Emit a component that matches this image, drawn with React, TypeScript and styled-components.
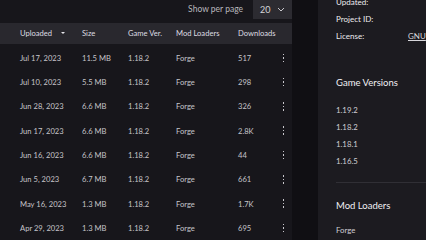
import React, { FC } from "react";
import styled, { createGlobalStyle } from "styled-components";

const GlobalStyle = createGlobalStyle`
  html, body {
    margin: 0;
    padding: 0;
    background: #100f13;
    font-family: Lato, "Noto Sans", sans-serif;
    -webkit-font-smoothing: antialiased;
    overflow: hidden;
  }
`;

const Page = styled.div`
  display: flex;
  width: 426px;
  height: 240px;
  overflow: hidden;
`;

const Files = styled.section`
  width: 292px;
  flex-shrink: 0;
  background: #17161b;
  display: flex;
  flex-direction: column;
`;

const Toolbar = styled.div`
  height: 31px;
  display: flex;
  align-items: flex-start;
  justify-content: flex-end;
  gap: 10px;
`;

const PerPageLabel = styled.span`
  margin-top: 4px;
  font-size: 8.5px;
  color: #b9b8bd;
`;

const Select = styled.div`
  width: 39px;
  height: 19px;
  background: #2c2b31;
  display: flex;
  align-items: center;
  justify-content: space-between;
  padding: 0 7px;
  box-sizing: border-box;
  font-size: 9px;
  color: #d5d4d8;
`;

const Row = styled.div<{ $head?: boolean }>`
  display: grid;
  grid-template-columns: 62px 46px 48px 62px 40px 1fr;
  align-items: center;
  padding-left: 20px;
  height: ${(p) => (p.$head ? "21px" : "24.3px")};
  background: ${(p) => (p.$head ? "#29282e" : "transparent")};
  margin-bottom: ${(p) => (p.$head ? "2px" : "0")};
  font-size: 7.6px;
  color: ${(p) => (p.$head ? "#dedde2" : "#c6c5ca")};
  flex-shrink: 0;
`;

const Cell = styled.span`
  color: inherit;
`;

const HeadCell = styled.span`
  display: flex;
  align-items: center;
  gap: 9px;
`;

const SortArrow = styled.span`
  width: 0;
  height: 0;
  border-left: 2px solid transparent;
  border-right: 2px solid transparent;
  border-top: 2.5px solid #e6e5ea;
`;

const Kebab = styled.span`
  display: flex;
  flex-direction: column;
  gap: 2px;
  padding-left: 4.5px;
  i {
    width: 1.5px;
    height: 1.5px;
    background: #c9c8cd;
    display: block;
  }
`;

const Sidebar = styled.aside`
  margin-left: 26px;
  flex: 1;
  background: #1c1b20;
  padding-left: 18px;
  color: #ecebef;
  display: flex;
  flex-direction: column;
`;

const InfoRow = styled.div<{ $first?: boolean }>`
  display: grid;
  grid-template-columns: 72px 1fr;
  height: 17px;
  align-items: center;
  font-size: 8px;
  margin-top: ${(p) => (p.$first ? "-7px" : "0")};
`;

const LinkText = styled.span`
  text-decoration: underline;
  color: #d8d7dc;
`;

const Spacer = styled.div<{ $h: number }>`
  height: ${(p) => p.$h}px;
  flex-shrink: 0;
`;

const Divider = styled.div`
  height: 1px;
  background: #302f35;
`;

const SectionTitle = styled.h3`
  margin: 0;
  font-size: 9.5px;
  font-weight: 400;
  color: #f1f0f4;
`;

const ListItem = styled.div`
  height: 17px;
  display: flex;
  align-items: center;
  font-size: 7.8px;
  color: #cfced3;
`;

type FileRow = [string, string, string, string, string];

const rows: FileRow[] = [
  ["Jul 17, 2023", "11.5 MB", "1.18.2", "Forge", "517"],
  ["Jul 10, 2023", "5.5 MB", "1.18.2", "Forge", "298"],
  ["Jun 28, 2023", "6.6 MB", "1.18.2", "Forge", "326"],
  ["Jun 17, 2023", "6.6 MB", "1.18.2", "Forge", "2.8K"],
  ["Jun 16, 2023", "6.6 MB", "1.18.2", "Forge", "44"],
  ["Jun 5, 2023", "6.7 MB", "1.18.2", "Forge", "661"],
  ["May 16, 2023", "1.3 MB", "1.18.2", "Forge", "1.7K"],
  ["Apr 29, 2023", "1.3 MB", "1.18.2", "Forge", "695"],
];

const Chevron: FC = () => (
  <svg width="8" height="5" viewBox="0 0 8 5">
    <path d="M1 1l3 3 3-3" fill="none" stroke="#c9c8cd" strokeWidth="1" />
  </svg>
);

export default function App() {
  return (
    <>
      <GlobalStyle />
      <Page>
        <Files>
          <Toolbar>
            <PerPageLabel>Show per page</PerPageLabel>
            <Select>
              <span>20</span>
              <Chevron />
            </Select>
          </Toolbar>
          <Row $head>
            <HeadCell>
              Uploaded <SortArrow />
            </HeadCell>
            <HeadCell>Size</HeadCell>
            <HeadCell>Game Ver.</HeadCell>
            <HeadCell>Mod Loaders</HeadCell>
            <HeadCell>Downloads</HeadCell>
            <span />
          </Row>
          {rows.map((r) => (
            <Row key={r[0]}>
              {r.map((c, i) => (
                <Cell key={i}>{c}</Cell>
              ))}
              <Kebab>
                <i />
                <i />
                <i />
              </Kebab>
            </Row>
          ))}
        </Files>
        <Sidebar>
          <InfoRow $first>
            <span>Updated:</span>
            <span />
          </InfoRow>
          <InfoRow>
            <span>Project ID:</span>
            <span />
          </InfoRow>
          <InfoRow>
            <span>License:</span>
            <LinkText>GNU</LinkText>
          </InfoRow>
          <Spacer $h={33} />
          <SectionTitle>Game Versions</SectionTitle>
          <Spacer $h={13} />
          <ListItem>1.19.2</ListItem>
          <ListItem>1.18.2</ListItem>
          <ListItem>1.18.1</ListItem>
          <ListItem>1.16.5</ListItem>
          <Spacer $h={13} />
          <Divider />
          <Spacer $h={17} />
          <SectionTitle>Mod Loaders</SectionTitle>
          <Spacer $h={10} />
          <ListItem>Forge</ListItem>
        </Sidebar>
      </Page>
    </>
  );
}
